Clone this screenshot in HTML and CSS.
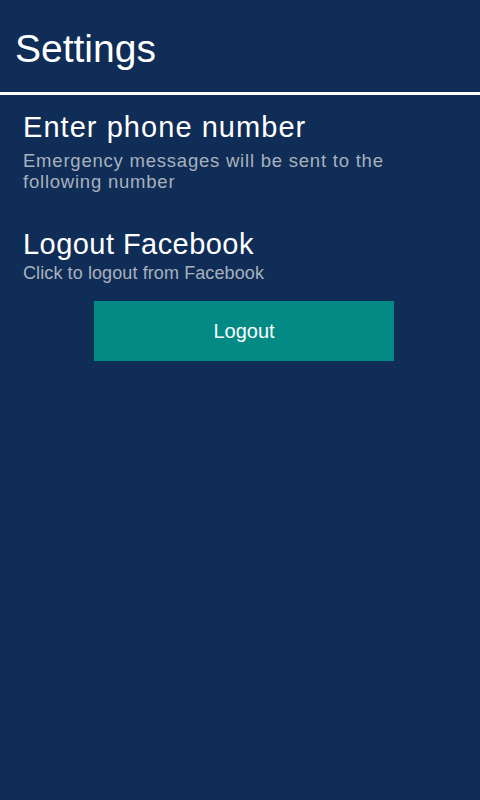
FILE: index.html
```html
<!DOCTYPE html>
<html>
<head>
<meta charset="utf-8">
<link rel="stylesheet" href="styles.css">
</head>
<body>
<header class="appbar"><h1 class="title">Settings</h1></header>
<main class="content">
  <section class="pref pref-phone">
    <h2 class="pref-title">Enter phone number</h2>
    <p class="pref-summary">Emergency messages will be sent to the following number</p>
  </section>
  <section class="pref pref-logout">
    <h2 class="pref-title">Logout Facebook</h2>
    <p class="pref-summary">Click to logout from Facebook</p>
  </section>
  <div class="btn-row"><button class="btn">Logout</button></div>
</main>
</body>
</html>
```
FILE: styles.css
```css
html, body { margin: 0; padding: 0; }
body {
  width: 480px; height: 800px; overflow: hidden;
  background: #0f2d56;
  font-family: "Liberation Sans", Arial, sans-serif;
  color: #fff;
}
.appbar {
  height: 92px;
  border-bottom: 3px solid #ffffff;
  display: flex; align-items: center;
  padding-left: 15px;
  box-sizing: content-box;
}
.title { margin: 0; font-weight: normal; font-size: 39px; line-height: 1; position: relative; top: 2px; }
.content { padding: 0 15px 0 23px; }
.pref { display: flex; flex-direction: column; }
.pref-title { margin: 0; font-weight: normal; font-size: 29px; line-height: 36px; }
.pref-summary { margin: 0; font-size: 18px; line-height: 21px; color: #a9b1bd; }
.pref-phone { padding-top: 14px; }
.pref-phone .pref-title { letter-spacing: 1.05px; }
.pref-phone .pref-summary { margin-top: 6px; font-size: 18.5px; line-height: 20.5px; letter-spacing: 0.78px; max-width: 385px; }
.pref-logout { padding-top: 34px; }
.pref-logout .pref-title { letter-spacing: 0.45px; }
.pref-logout .pref-summary { margin-top: 1px; letter-spacing: 0.1px; }
.btn-row { display: flex; justify-content: center; padding-top: 17px; }
.btn {
  width: 300px; height: 60px; border: none; background: #038a84;
  color: #fff; font-family: "Liberation Sans", Arial, sans-serif; font-size: 20px;
}
```
